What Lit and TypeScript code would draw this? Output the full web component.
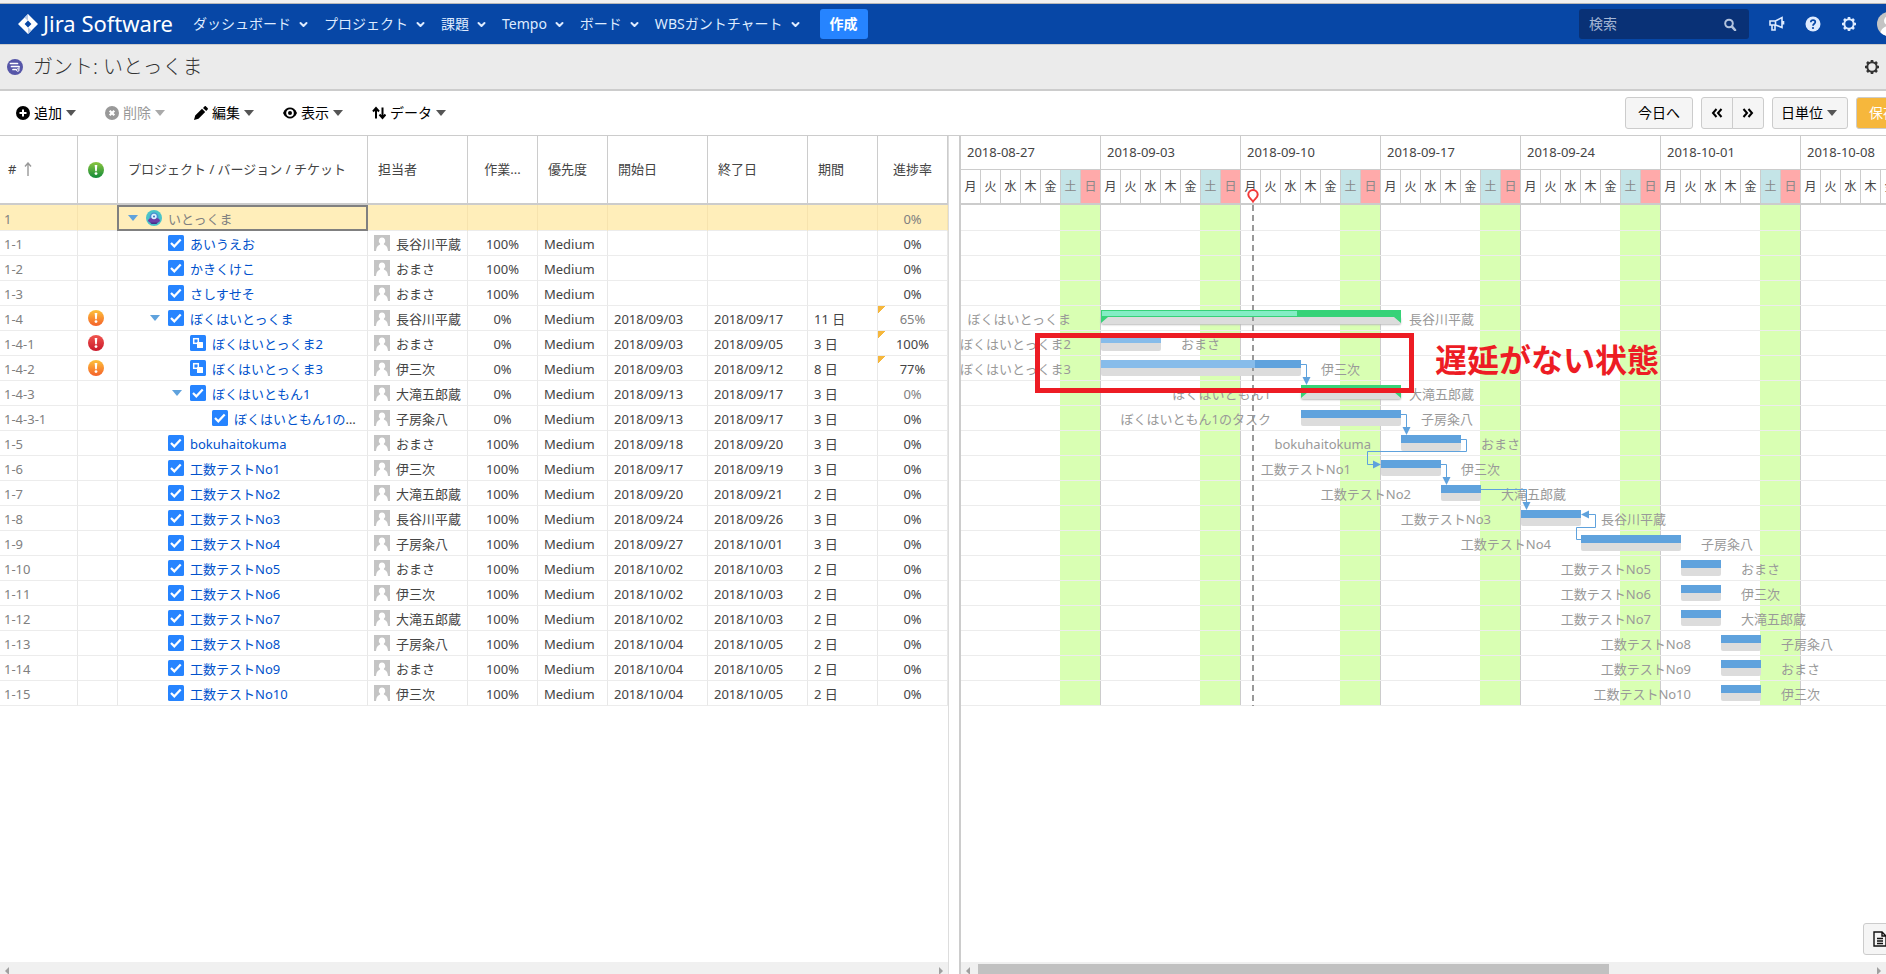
import { LitElement, html, svg, css, nothing } from "lit";
import { customElement } from "lit/decorators.js";
import { classMap } from "lit/directives/class-map.js";

type Kind = "project" | "task" | "sub";
type Alert = "warn" | "error" | "";

interface Row {
  no: string;
  level: number;
  kind: Kind;
  name: string;
  who?: string;
  work?: string;
  start?: string;
  end?: string;
  days?: number;
  progress: number;
  alert?: Alert;
  open?: boolean;
  edited?: boolean;
  summary?: boolean;
}

const HEI = "長谷川平蔵";
const OMA = "おまさ";
const ISA = "伊三次";
const OTA = "大滝五郎蔵";
const KUM = "子房粂八";

const ROWS: Row[] = [
  { no: "1", level: 0, kind: "project", name: "いとっくま", progress: 0, open: true },
  { no: "1-1", level: 1, kind: "task", name: "あいうえお", who: HEI, work: "100%", progress: 0 },
  { no: "1-2", level: 1, kind: "task", name: "かきくけこ", who: OMA, work: "100%", progress: 0 },
  { no: "1-3", level: 1, kind: "task", name: "さしすせそ", who: OMA, work: "100%", progress: 0 },
  { no: "1-4", level: 1, kind: "task", name: "ぼくはいとっくま", who: HEI, work: "0%", start: "2018/09/03", end: "2018/09/17", days: 11, progress: 65, alert: "warn", open: true, edited: true, summary: true },
  { no: "1-4-1", level: 2, kind: "sub", name: "ぼくはいとっくま2", who: OMA, work: "0%", start: "2018/09/03", end: "2018/09/05", days: 3, progress: 100, alert: "error", edited: true },
  { no: "1-4-2", level: 2, kind: "sub", name: "ぼくはいとっくま3", who: ISA, work: "0%", start: "2018/09/03", end: "2018/09/12", days: 8, progress: 77, alert: "warn", edited: true },
  { no: "1-4-3", level: 2, kind: "task", name: "ぼくはいともん1", who: OTA, work: "0%", start: "2018/09/13", end: "2018/09/17", days: 3, progress: 0, open: true, summary: true },
  { no: "1-4-3-1", level: 3, kind: "task", name: "ぼくはいともん1のタスク", who: KUM, work: "0%", start: "2018/09/13", end: "2018/09/17", days: 3, progress: 0 },
  { no: "1-5", level: 1, kind: "task", name: "bokuhaitokuma", who: OMA, work: "100%", start: "2018/09/18", end: "2018/09/20", days: 3, progress: 0 },
  { no: "1-6", level: 1, kind: "task", name: "工数テストNo1", who: ISA, work: "100%", start: "2018/09/17", end: "2018/09/19", days: 3, progress: 0 },
  { no: "1-7", level: 1, kind: "task", name: "工数テストNo2", who: OTA, work: "100%", start: "2018/09/20", end: "2018/09/21", days: 2, progress: 0 },
  { no: "1-8", level: 1, kind: "task", name: "工数テストNo3", who: HEI, work: "100%", start: "2018/09/24", end: "2018/09/26", days: 3, progress: 0 },
  { no: "1-9", level: 1, kind: "task", name: "工数テストNo4", who: KUM, work: "100%", start: "2018/09/27", end: "2018/10/01", days: 3, progress: 0 },
  { no: "1-10", level: 1, kind: "task", name: "工数テストNo5", who: OMA, work: "100%", start: "2018/10/02", end: "2018/10/03", days: 2, progress: 0 },
  { no: "1-11", level: 1, kind: "task", name: "工数テストNo6", who: ISA, work: "100%", start: "2018/10/02", end: "2018/10/03", days: 2, progress: 0 },
  { no: "1-12", level: 1, kind: "task", name: "工数テストNo7", who: OTA, work: "100%", start: "2018/10/02", end: "2018/10/03", days: 2, progress: 0 },
  { no: "1-13", level: 1, kind: "task", name: "工数テストNo8", who: KUM, work: "100%", start: "2018/10/04", end: "2018/10/05", days: 2, progress: 0 },
  { no: "1-14", level: 1, kind: "task", name: "工数テストNo9", who: OMA, work: "100%", start: "2018/10/04", end: "2018/10/05", days: 2, progress: 0 },
  { no: "1-15", level: 1, kind: "task", name: "工数テストNo10", who: ISA, work: "100%", start: "2018/10/04", end: "2018/10/05", days: 2, progress: 0 },
];

const DAY = 20;
const ROW = 25;
const ORIGIN = Date.UTC(2018, 7, 27);
const MS = 86400000;
const TABLE_WIDTH = 961;
const DAY_NAMES = ["月", "火", "水", "木", "金", "土", "日"];

function dayIndex(text: string): number {
  const [y, m, d] = text.split("/").map(Number);
  return Math.round((Date.UTC(y, m - 1, d) - ORIGIN) / MS);
}

function weekLabel(i: number): string {
  return new Date(ORIGIN + i * 7 * MS).toISOString().slice(0, 10);
}

const startX = (r: Row) => dayIndex(r.start!) * DAY;
const endX = (r: Row) => (dayIndex(r.end!) + 1) * DAY;
const lineY = (i: number) => i * ROW + 9.5;

function dropLink(from: number, to: number) {
  const x0 = endX(ROWS[from]);
  const x = Math.max(x0, startX(ROWS[to])) + 5.5;
  const tip = to * ROW + 4;
  return svg`<path class="wire" d="M${x0} ${lineY(from)}H${x}V${tip - 6}"/>
    <path class="head" d="M${x - 4} ${tip - 7}h8l-4 8z"/>`;
}

function wrapLink(from: number, to: number) {
  const x0 = endX(ROWS[from]);
  const x1 = startX(ROWS[to]);
  return svg`<path class="wire" d="M${x0} ${lineY(from)}h5.5v12H${x1 - 13.5}V${lineY(to)}H${x1 - 7}"/>
    <path class="head" d="M${x1 - 8} ${lineY(to) - 4}v8l8 -4z"/>`;
}

function backLink(from: number, to: number) {
  const x0 = startX(ROWS[from]);
  const x1 = endX(ROWS[to]);
  return svg`<path class="wire" d="M${x0} ${lineY(from)}h-4.500v-12H${x1 + 14.5}V${lineY(to)}H${x1 + 7}"/>
    <path class="head" d="M${x1 + 8} ${lineY(to) - 4}v8l-8 -4z"/>`;
}

const icons = {
  diamond: svg`<path d="M10 0 20 10 10 20 0 10zM10 6.600 6.600 10 10 13.400 13.400 10z" fill="#fff" fill-rule="evenodd"/><path d="M10 0 6.500 3.500 10 7z" fill="#b9cbe8"/><path d="M10 20 13.500 16.500 10 13z" fill="#b9cbe8"/>`,
  chevron: svg`<path d="M1.500 2 4.500 5 7.500 2" fill="none" stroke="currentColor" stroke-width="2" stroke-linecap="round" stroke-linejoin="round"/>`,
  caret: svg`<path d="M0 0h10L5 6z" fill="currentColor"/>`,
  search: svg`<circle cx="5" cy="5.500" r="3.800" fill="none" stroke="currentColor" stroke-width="2"/><path d="M8 8.700 11 12" stroke="currentColor" stroke-width="2.600" stroke-linecap="round"/>`,
  horn: svg`<path d="M1 5h5.500L13 1.500v10L6.500 9H1zM6.500 5v4M3 9.500V14h3V9.500M14.500 5v3.500" fill="none" stroke="currentColor" stroke-width="1.600"/>`,
  help: svg`<circle cx="8" cy="8" r="7.500" fill="currentColor"/><path d="M5.800 6.300c0-3 4.500-2.800 4.500-.2C10.300 7.700 8 7.800 8 9.700" fill="none" stroke="#0747a6" stroke-width="1.700"/><circle cx="8" cy="12" r="1.100" fill="#0747a6"/>`,
  gear: svg`<circle cx="8" cy="8" r="4.700" fill="none" stroke="currentColor" stroke-width="2"/><path d="M8 1v2M8 13v2M1 8h2M13 8h2M3 3l1.500 1.500M11.500 11.500 13 13M3 13l1.500-1.500M11.500 4.500 13 3" stroke="currentColor" stroke-width="2.600"/>`,
  plus: svg`<circle cx="7" cy="7" r="7" fill="currentColor"/><path d="M7 3.500v7M3.500 7h7" stroke="#fff" stroke-width="2"/>`,
  cross: svg`<circle cx="7" cy="7" r="7" fill="currentColor"/><path d="M4.700 4.700l4.600 4.600M9.300 4.700 4.700 9.300" stroke="#fff" stroke-width="2.200"/>`,
  pencil: svg`<path d="M0 14l1.200-4.500L8 2.800l3.200 3.200L4.500 12.800zM9 1.900 10.500.4c.5-.5 1-.5 1.500 0l1.600 1.600c.5.500.5 1 0 1.500L12.200 5z" fill="currentColor"/>`,
  eye: svg`<path d="M0 7C3-.3 11-.3 14 7 11 14.300 3 14.300 0 7z" fill="currentColor"/><circle cx="7" cy="7" r="2.900" fill="none" stroke="#fff" stroke-width="1.800"/>`,
  updown: svg`<path d="M4 12.500V2.500M1 5.500l3-3.500 3 3.500M10.500 1.500v10M7.500 8.500l3 3.500 3-3.500" fill="none" stroke="currentColor" stroke-width="2"/>`,
  dblLeft: svg`<path d="M5.500 1 2 5l3.500 4M10.500 1 7 5l3.500 4" fill="none" stroke="currentColor" stroke-width="2"/>`,
  dblRight: svg`<path d="M1.500 1 5 5 1.500 9M6.500 1 10 5 6.500 9" fill="none" stroke="currentColor" stroke-width="2"/>`,
  doc: svg`<path d="M1 1h8l4 4v10H1zM9 1v4h4" fill="none" stroke="currentColor" stroke-width="1.400"/><path d="M4 7.500h6M4 10h6M4 12.500h6" stroke="currentColor" stroke-width="1.300"/>`,
  gantt: svg`<circle cx="8" cy="8" r="8" fill="#5656a8"/><path d="M3.500 4.500h7M4.500 7.500h7.500M6 10.500h3" stroke="#fff" stroke-width="1.700" stroke-linecap="round"/><path d="M12 7.500v2.500" stroke="#fff" stroke-width="1"/><circle cx="10.800" cy="11" r="1.300" fill="#5656a8" stroke="#fff"/>`,
  person: svg`<path d="M0 0h16v16H0z" fill="#c4c4c4"/><path d="M8 2.500a3.200 3.300 0 0 1 2 5.900c-.4.800 0 1.200.8 1.600C13 11 13.700 13 14 16H2c.3-3 1-5 3.200-6 .8-.4 1.200-.8.8-1.600A3.200 3.300 0 0 1 8 2.500z" fill="#fff"/>`,
  check: svg`<rect width="16" height="16" rx="1.500" fill="#2684ff"/><path d="M3 8l3.300 3.300L12.700 4.500" fill="none" stroke="#fff" stroke-width="2.200"/>`,
  sub: svg`<rect width="16" height="16" rx="1.500" fill="#2684ff"/><rect x="3.700" y="3.700" width="4.600" height="4.600" fill="none" stroke="#fff" stroke-width="1.500"/><rect x="7" y="7" width="6" height="6" rx=".5" fill="#fff"/>`,
  project: svg`<circle cx="8" cy="8" r="8" fill="#4bc3c9"/><path d="M3.500 7.500a4.500 5 0 0 1 9 0V10h-9z" fill="#4a8fd0"/><ellipse cx="8" cy="10.500" rx="6" ry="2.800" fill="#6a3fa8"/><path d="M4 12.500h8L10.500 14h-5z" fill="#45308a"/><circle cx="8" cy="6.500" r="2.700" fill="#dff1ff"/><circle cx="8" cy="6.500" r="1" fill="#3a6fb5"/>`,
};

function icon(name: keyof typeof icons, w: number, h = w, cls = "") {
  return html`<svg class="icon ${cls}" width=${w} height=${h} viewBox="0 0 ${w} ${h}" aria-hidden="true">${icons[name]}</svg>`;
}

function alertIcon(tone: string) {
  return html`<svg class="icon alert ${tone}" width="16" height="16" viewBox="0 0 16 16" role="img" aria-label=${tone}>
    <defs><linearGradient id="g-${tone}" x1="0" y1="0" x2="0" y2="1"><stop class="g0" offset="0"/><stop class="g1" offset="1"/></linearGradient></defs>
    <circle cx="8" cy="8" r="8" fill="url(#g-${tone})"/>
    <path d="M6.700 3h2.600l-.5 6.300H7.200z" fill="#fff"/><circle cx="8" cy="11.600" r="1.400" fill="#fff"/></svg>`;
}

@customElement("gantt-table")
export class GanttTable extends LitElement {
  static styles = css`
    :host { display: block; }
    .grid { table-layout: fixed; width: 948px; border-collapse: separate; border-spacing: 0; font-size: 13px; line-height: 18px; color: #444; }
    .c-no { width: 78px; } .c-alert { width: 40px; } .c-name { width: 250px; } .c-who { width: 100px; }
    .c-s { width: 70px; } .c-date { width: 100px; }
    th { box-sizing: border-box; height: 69px; padding: 0 10px 2px; font-weight: 400; text-align: left; border-right: 1px solid #ccc; border-bottom: 2px solid #ccc; white-space: nowrap; }
    th.no { padding: 0 8px 2px; }
    th .inner { display: flex; align-items: center; gap: 8px; }
    .sort { color: #999; }
    td { box-sizing: border-box; height: 25px; padding: 2px 6px 0; border-right: 1px solid #e8e8e8; border-bottom: 1px solid #ececec; white-space: nowrap; overflow: hidden; }
    tr.selected td { height: 26px; background: #ffeeba; border-right-color: #f6e3ae; color: #808080; }
    tr.selected td.name { position: relative; overflow: visible; }
    tr.selected td.name::after { content: ""; position: absolute; inset: 0 -1px -1px; border: 2px solid #808080; }
    td.no { padding: 2px 4px 0; color: #808080; }
    td.flag, th.flag { padding: 0 10px; }
    th.center, td.center { text-align: center; }
    td.name { padding: 0 10px; }
    td.who { padding: 0 6px; }
    .node { display: flex; align-items: center; }
    .icon { display: block; flex: none; }
    .toggle { display: flex; align-items: center; justify-content: center; width: 10px; height: 16px; margin: 0 8px 0 0; padding: 0; border: 0; background: none; color: #5fa2dd; flex: none; }
    .gap { width: 18px; flex: none; }
    .label { margin-left: 6px; padding-top: 2px; overflow: hidden; text-overflow: ellipsis; }
    .label a { color: #0052cc; text-decoration: none; }
    .person { display: flex; align-items: center; gap: 6px; }
    .person span { padding-top: 2px; }
    td.muted { color: #808080; }
    td.edited { background: linear-gradient(135deg, #f6b73c 5px, transparent 5px) no-repeat; }
    .warn .g0 { stop-color: #fdc23a; } .warn .g1 { stop-color: #f4602a; }
    .error .g0 { stop-color: #f0554f; } .error .g1 { stop-color: #c9182b; }
    .good .g0 { stop-color: #8cc63f; } .good .g1 { stop-color: #128a3a; }
  `;

  private row(r: Row) {
    const glyph = r.kind === "project" ? "project" : r.kind === "sub" ? "sub" : "check";
    return html`<tr class=${classMap({ selected: r.level === 0 })}>
      <td class="no">${r.no}</td>
      <td class="flag">${r.alert ? alertIcon(r.alert) : nothing}</td>
      <td class="name"><div class="node" style="padding-left:${r.level * 22}px">
        ${r.open ? html`<button class="toggle" aria-label="折りたたむ">${icon("caret", 10, 6)}</button>` : html`<span class="gap"></span>`}
        ${icon(glyph, 16)}
        <span class="label">${r.kind === "project" ? r.name : html`<a href="#">${r.name}</a>`}</span>
      </div></td>
      <td class="who">${r.who ? html`<div class="person">${icon("person", 16)}<span>${r.who}</span></div>` : nothing}</td>
      <td class="center">${r.work ?? nothing}</td>
      <td>${r.who ? "Medium" : nothing}</td>
      <td>${r.start ?? nothing}</td>
      <td>${r.end ?? nothing}</td>
      <td>${r.days ? `${r.days} 日` : nothing}</td>
      <td class=${classMap({ center: true, edited: !!r.edited, muted: !!r.summary })}>${r.progress}%</td>
    </tr>`;
  }

  render() {
    return html`<table class="grid">
      <colgroup><col class="c-no"><col class="c-alert"><col class="c-name"><col class="c-who"><col class="c-s"><col class="c-s"><col class="c-date"><col class="c-date"><col class="c-s"><col class="c-s"></colgroup>
      <thead><tr>
        <th class="no"><div class="inner"><span>#</span><svg class="icon sort" width="8" height="14" viewBox="0 0 8 14" aria-hidden="true"><path d="M4 14V1M1 4.500 4 1l3 3.500" fill="none" stroke="currentColor" stroke-width="1.400"/></svg></div></th>
        <th class="flag">${alertIcon("good")}</th>
        <th>プロジェクト / バージョン / チケット</th>
        <th>担当者</th><th class="center">作業...</th><th>優先度</th><th>開始日</th><th>終了日</th><th>期間</th><th class="center">進捗率</th>
      </tr></thead>
      <tbody>${ROWS.map((r) => this.row(r))}</tbody>
    </table>`;
  }
}

@customElement("gantt-chart")
export class GanttChart extends LitElement {
  static styles = css`
    :host { display: block; overflow: hidden; font-size: 13px; color: #444; }
    .head { display: flex; border-bottom: 2px solid #ccc; width: max-content; }
    .week { flex: none; }
    .date { box-sizing: border-box; height: 34px; padding: 0 6px; line-height: 33px; border-bottom: 1px solid #ccc; border-right: 1px solid #ccc; }
    .days { display: flex; }
    .day { box-sizing: border-box; width: 20px; height: 33px; line-height: 33px; text-align: center; font-size: 12px; border-right: 1px solid #ccc; }
    .day.sat { background: #c4e4e7; color: #888; }
    .day.sun { background: #ffaaaa; color: #888; }
    .canvas { position: relative; padding-top: 1px; background: repeating-linear-gradient(90deg, transparent 0 99px, #d9ffb3 99px 139px, #ccc 139px 140px); }
    .lane { position: relative; box-sizing: border-box; height: 25px; border-bottom: 1px solid #ececec; }
    .span { position: absolute; top: 0; height: 24px; line-height: 26px; color: #999; }
    .plan { position: absolute; z-index: 1; left: 0; right: 0; top: 12px; height: 8px; background: #dcdcdc; border-radius: 0 0 2px 2px; }
    .bar { position: absolute; z-index: 3; left: 0; right: 0; top: 4px; height: 8px; background: #5fa2dd; }
    .done { height: 100%; background: #87bcea; }
    .summary .plan { top: 11px; height: 7px; box-shadow: 0 1px 2px #bbb; }
    .summary .bar { height: 13px; background: #36d278; clip-path: polygon(0 0, 100% 0, 100% 100%, calc(100% - 7px) 7px, 7px 7px, 0 100%); }
    .summary .done { height: 5px; margin: 1px 0 0 1px; background: #83edc4; }
    .title, .owner { position: absolute; z-index: 2; top: 0; white-space: nowrap; }
    .title { right: calc(100% + 30px); }
    .owner { left: calc(100% + 20px); }
    .summary .owner { left: calc(100% + 8px); }
    .links { position: absolute; z-index: 3; left: 0; top: 0; width: 100%; height: 100%; overflow: visible; }
    .wire { fill: none; stroke: #5fa2dd; stroke-width: 1; }
    .links .head { fill: #5fa2dd; }
    .today { position: absolute; z-index: 2; top: 0; bottom: 0; width: 2px; background: repeating-linear-gradient(180deg, #999 0 6px, transparent 6px 10px); }
    .pin { position: absolute; left: -5px; top: -16px; }
    .note { position: absolute; z-index: 4; left: 74px; top: 128px; display: flex; align-items: center; gap: 21px; color: #ed1c24; font-size: 32px; font-weight: 700; line-height: 40px; white-space: nowrap; }
    .frame { box-sizing: border-box; width: 379px; height: 60px; border: 5px solid #ed1c24; }
    .note span { margin-bottom: 6px; }
  `;

  private lane(r: Row) {
    if (!r.start) return html`<div class="lane"></div>`;
    const x = startX(r);
    return html`<div class="lane"><div class=${classMap({ span: true, summary: !!r.summary })} style="left:${x}px;width:${endX(r) - x}px">
      <div class="plan"></div>
      <div class="bar">${r.progress ? html`<div class="done" style="width:${r.progress}%"></div>` : nothing}</div>
      <span class="title">${r.name}</span><span class="owner">${r.who}</span>
    </div></div>`;
  }

  render() {
    const weeks = Math.max(1, Math.ceil((window.innerWidth - TABLE_WIDTH) / (7 * DAY)));
    return html`
      <div class="head">${Array.from({ length: weeks }, (_, i) => html`<div class="week">
        <div class="date">${weekLabel(i)}</div>
        <div class="days">${DAY_NAMES.map((d, k) => html`<div class=${classMap({ day: true, sat: k === 5, sun: k === 6 })}>${d}</div>`)}</div>
      </div>`)}</div>
      <div class="canvas">
        ${ROWS.map((r) => this.lane(r))}
        <svg class="links" aria-hidden="true">
          ${dropLink(6, 7)}${dropLink(8, 9)}${wrapLink(9, 10)}${dropLink(10, 11)}${dropLink(11, 12)}${backLink(13, 12)}
        </svg>
        <div class="today" style="left:${14 * DAY + 11}px">
          <svg class="pin" width="12" height="14" viewBox="0 0 12 14" aria-hidden="true"><path d="M6 12.500C4.500 10 1.300 9 1.300 5.800a4.700 4.700 0 0 1 9.400 0C10.700 9 7.500 10 6 12.500z" fill="#fff" stroke="#f23a3a" stroke-width="2"/></svg>
        </div>
        <div class="note"><div class="frame"></div><span>遅延がない状態</span></div>
      </div>`;
  }
}

@customElement("scroll-track")
export class ScrollTrack extends LitElement {
  static properties = { size: { type: String } };
  declare size: string;
  static styles = css`
    :host { display: flex; align-items: center; gap: 8px; height: 17px; padding: 0 5px; background: #f0f0f0; }
    .arrow { width: 0; height: 0; border: 4px solid transparent; flex: none; }
    .left { border-right-color: #a0a0a0; border-left-width: 0; }
    .right { border-left-color: #a0a0a0; border-right-width: 0; margin-left: auto; }
    .thumb { height: 13px; background: #c1c1c1; }
  `;
  render() {
    return html`<span class="arrow left"></span>
      ${this.size ? html`<span class="thumb" style="width:${this.size}"></span>` : nothing}
      <span class="arrow right"></span>`;
  }
}

@customElement("app-root")
export class AppRoot extends LitElement {
  static styles = css`
    :host { display: flex; flex-direction: column; height: 100vh; overflow: hidden; background: #fff; font-family: "Noto Sans", "Noto Sans CJK JP", sans-serif; font-size: 14px; color: #333; }
    button, input, select { font: inherit; color: inherit; }
    .icon { display: block; flex: none; }
    .strip { flex: none; height: 3px; background: #f0f0f0; border-bottom: 1px solid #b8b8b8; }
    .top { flex: none; display: flex; align-items: center; height: 40px; padding: 0 16px 0 18px; background: #0747a6; color: #deebff; border-bottom: 1px solid #ccc; white-space: nowrap; }
    .brand { display: flex; align-items: center; gap: 5px; margin-right: 20px; color: #fff; font-size: 22px; line-height: 28px; text-decoration: none; }
    .nav { display: flex; gap: 16px; }
    .item { display: flex; align-items: center; gap: 8px; padding: 0; border: 0; background: none; }
    .item span, .menu span, .brand span { padding-bottom: 2px; }
    .create { height: 30px; margin-left: 20px; padding: 0 10px 2px; border: 0; border-radius: 3px; background: #2684ff; color: #fff; font-weight: 700; }
    .tools { display: flex; align-items: center; gap: 20px; margin: 0 -31px 0 auto; }
    .find { display: flex; align-items: center; box-sizing: border-box; width: 170px; height: 30px; padding: 0 12px 0 10px; border-radius: 3px; background: #093176; color: #b3c3dd; }
    .find input { flex: 1; min-width: 0; padding: 0 0 2px; border: 0; outline: 0; background: none; }
    .find input::placeholder { color: #a5b6d3; opacity: 1; }
    .plain { display: flex; padding: 0; border: 0; background: none; }
    .avatar { width: 24px; height: 24px; border-radius: 50%; overflow: hidden; }
    .title { flex: none; display: flex; align-items: center; gap: 10px; height: 44px; padding: 0 6px 0 7px; background: #ebebeb; border-bottom: 2px solid #ccc; }
    h1 { flex: 1; margin: 0; font-size: 20px; line-height: 28px; font-weight: 300; }
    .bar { flex: none; display: flex; align-items: center; gap: 29px; height: 44px; padding: 0 16px; border-bottom: 1px solid #ccc; color: #000; white-space: nowrap; }
    .menu { display: flex; align-items: center; gap: 4px; padding: 0; border: 0; background: none; }
    .menu .caret, .unit .caret { color: #555; }
    .menu:disabled { color: #999; }
    .menu:disabled .caret { color: #aaa; }
    .actions { display: flex; gap: 8px; margin: 0 -40px 0 auto; }
    .btn { box-sizing: border-box; height: 32px; padding: 0 12px 2px; border: 1px solid #ccc; border-radius: 3px; background: #f5f5f5; }
    .pair { display: flex; }
    .pair .btn { padding: 0 9px; border-radius: 3px 0 0 3px; }
    .pair .btn + .btn { margin-left: -1px; border-radius: 0 3px 3px 0; }
    .unit { position: relative; display: flex; align-items: center; }
    .unit select { appearance: none; width: 76px; padding: 0 8px 2px; }
    .unit .caret { position: absolute; right: 11px; pointer-events: none; }
    .save { background: #f6b73c; color: #fff; }
    .panes { flex: 1; min-height: 0; display: flex; gap: 10px; }
    .left, .right { display: flex; flex-direction: column; min-height: 0; }
    .left { flex: none; border-right: 1px solid #ddd; }
    .right { flex: 1; min-width: 0; border-left: 2px solid #ccc; }
    .fill { flex: 1; min-height: 0; overflow: hidden; }
    scroll-track { flex: none; margin-bottom: -5px; }
    .float { position: fixed; right: -11px; bottom: 19px; padding: 0 9px; color: #111; }
  `;

  private menu(glyph: keyof typeof icons, text: string, off = false) {
    return html`<button class="menu" ?disabled=${off}>${icon(glyph, 14)}<span>${text}</span>${icon("caret", 10, 6, "caret")}</button>`;
  }

  render() {
    const nav = ["ダッシュボード", "プロジェクト", "課題", "Tempo", "ボード", "WBSガントチャート"];
    return html`
      <div class="strip"></div>
      <header class="top">
        <a class="brand" href="#">${icon("diamond", 20)}<span>Jira Software</span></a>
        <nav class="nav">${nav.map((n) => html`<button class="item"><span>${n}</span>${icon("chevron", 9, 7)}</button>`)}</nav>
        <button class="create">作成</button>
        <div class="tools">
          <label class="find"><input type="text" placeholder="検索" aria-label="検索">${icon("search", 13)}</label>
          <button class="plain" aria-label="フィードバック">${icon("horn", 16)}</button>
          <button class="plain" aria-label="ヘルプ">${icon("help", 16)}</button>
          <button class="plain" aria-label="管理">${icon("gear", 16)}</button>
          <button class="plain avatar" aria-label="プロフィール"><svg width="24" height="24" viewBox="0 0 16 16" aria-hidden="true">${icons.person}</svg></button>
        </div>
      </header>
      <div class="title">${icon("gantt", 16)}<h1>ガント: いとっくま</h1><button class="plain" aria-label="設定">${icon("gear", 16)}</button></div>
      <div class="bar">
        ${this.menu("plus", "追加")}${this.menu("cross", "削除", true)}${this.menu("pencil", "編集")}${this.menu("eye", "表示")}${this.menu("updown", "データ")}
        <div class="actions">
          <button class="btn">今日へ</button>
          <div class="pair"><button class="btn" aria-label="前へ">${icon("dblLeft", 12, 10)}</button><button class="btn" aria-label="次へ">${icon("dblRight", 12, 10)}</button></div>
          <label class="unit"><select class="btn" aria-label="単位"><option>日単位</option></select>${icon("caret", 10, 6, "caret")}</label>
          <button class="btn save">保存</button>
        </div>
      </div>
      <main class="panes">
        <section class="left"><div class="fill"><gantt-table></gantt-table></div><scroll-track></scroll-track></section>
        <section class="right"><gantt-chart class="fill"></gantt-chart><scroll-track size="69%"></scroll-track></section>
      </main>
      <button class="btn float" aria-label="詳細">${icon("doc", 14, 16)}</button>`;
  }
}
